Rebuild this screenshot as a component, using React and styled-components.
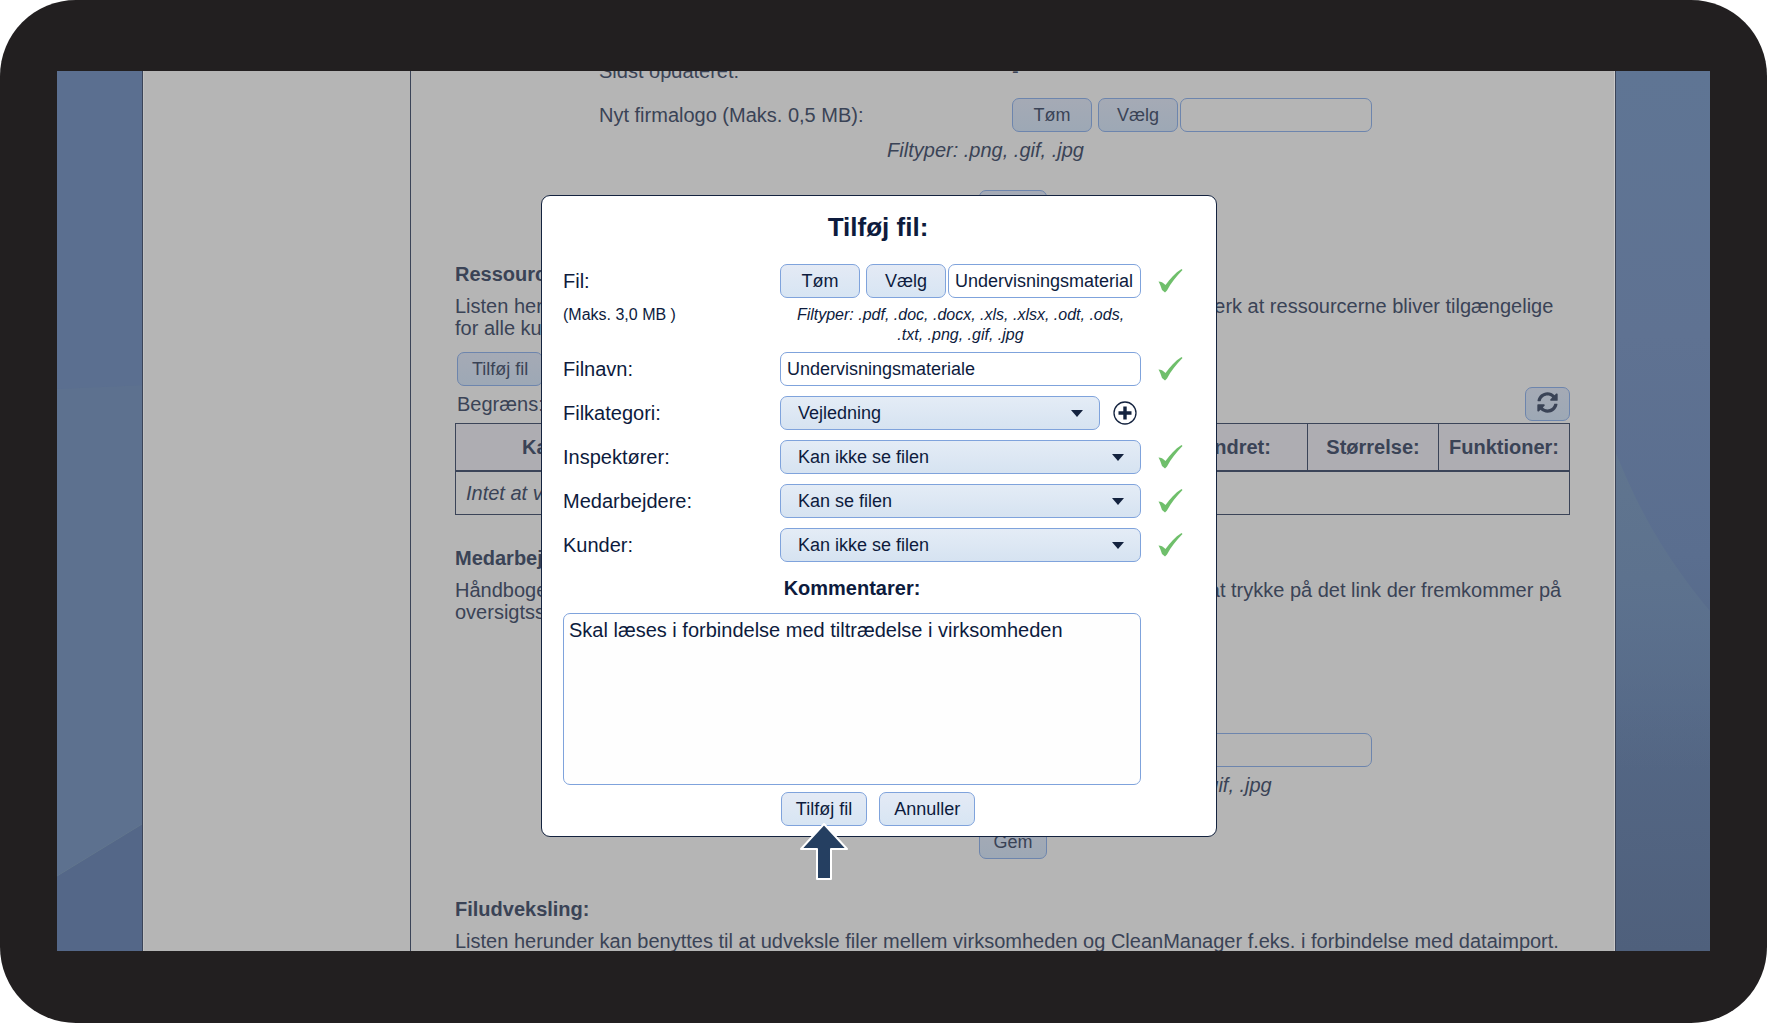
import { useState } from "react";
import styled, { createGlobalStyle } from "styled-components";
import { FaSyncAlt } from "react-icons/fa";

const GlobalStyle = createGlobalStyle`
  * {
    box-sizing: border-box;
  }
  body {
    margin: 0;
    background: #fff;
    font-family: "Liberation Sans", Arial, sans-serif;
    font-size: 20px;
    line-height: 22px;
  }
  button,
  input,
  select,
  textarea {
    font-family: inherit;
    margin: 0;
  }
`;

const Device = styled.div`
  height: 100vh;
  min-height: 900px;
  padding: 71px 57px 72px;
  border-radius: 76px;
  background: #221f20;
`;

const Screen = styled.div`
  position: relative;
  height: 100%;
  overflow: hidden;
  background: #5b6f90;
`;

const WallpaperSvg = styled.svg`
  position: absolute;
  inset: 0;
  width: 100%;
  height: 100%;
`;

const Page = styled.div`
  position: relative;
  display: flex;
  height: 100%;
  margin: 0 94px 0 85px;
  overflow: hidden;
  background: #b5b5b5;
  border: solid #3b4458;
  border-width: 0 1px;
  box-shadow: inset 1px 0 #c0c0c0, inset -1px 0 #cacaca;
  color: #3a4356;
`;

const Sidebar = styled.aside`
  flex: 0 0 268px;
  border-right: 1px solid #3b4458;
`;

const Main = styled.main`
  flex: 1;
  min-width: 0;
  height: max-content;
  margin-top: -11px;
  padding: 0 45px 0 44px;
`;

const Heading = styled.h2`
  margin: 0 0 10px;
  font-size: 20px;
  line-height: 22px;
`;

const Text = styled.p`
  margin: 0;
`;

const UploadForm = styled.form`
  display: flex;
  flex-direction: column;
  padding: 0 144px;
  margin: ${(props) => (props.$spaced ? "72px 0 39px" : "0 0 39px")};
`;

const UploadRow = styled.div`
  display: flex;
  align-items: center;
  margin-bottom: ${(props) => props.$gap}px;
`;

const UploadLabel = styled.label`
  flex: 1;
`;

const UploadValue = styled.span`
  flex: 0 0 414px;
`;

const UploadControls = styled.div`
  flex: 0 0 414px;
  display: flex;
  padding-right: 54px;
`;

const FileTypes = styled.p`
  margin: 0 54px 29px 0;
  text-align: center;
  font-style: italic;
`;

const Button = styled.button`
  height: 34px;
  padding: 0 14px;
  border: 1px solid ${(props) => (props.$dim ? "#6d85ad" : "#7fa3dc")};
  border-radius: 7px;
  background: ${(props) =>
    props.$dim
      ? "linear-gradient(#a5aab5, #9da8b5)"
      : "linear-gradient(#e4eaf5, #d7e5f3)"};
  color: ${(props) => (props.$dim ? "#3a4356" : "#0d1b3d")};
  font-size: 18px;
  line-height: 22px;
  white-space: nowrap;
`;

const FileButton = styled(Button)`
  flex: 0 0 80px;
  padding: 0;
  margin-right: ${(props) => (props.$last ? 2 : 6)}px;
`;

const CenterButton = styled(Button)`
  align-self: center;
  width: 68px;
`;

const IconButton = styled(Button)`
  width: 45px;
  padding: 0 0 3px;
  svg {
    display: block;
    margin: 0 auto;
  }
`;

const Input = styled.input`
  flex: 1;
  width: 100%;
  min-width: 0;
  height: 34px;
  padding: 0 6px;
  border: 1px solid ${(props) => (props.$dim ? "#6d85ad" : "#7fa3dc")};
  border-radius: 7px;
  background: ${(props) => (props.$dim ? "#b5b5b5" : "#fff")};
  color: #0d1b3d;
  font-size: 18px;
`;

const ListActions = styled.div`
  padding: 13px 0 1px 2px;
`;

const FilterBar = styled.div`
  display: flex;
  align-items: center;
  justify-content: space-between;
  padding-left: 2px;
  margin-bottom: 2px;
`;

const Table = styled.table`
  width: 100%;
  margin-bottom: 32px;
  border-collapse: collapse;
  table-layout: fixed;
  th,
  td {
    border: 1px solid #3b4458;
    padding: 0 10px;
  }
  th {
    height: 47px;
    border-bottom-width: 2px;
    background: #aeadb2;
  }
  td {
    height: 44px;
    font-style: italic;
  }
`;

const Overlay = styled.div`
  position: absolute;
  inset: 0;
  display: flex;
  justify-content: center;
  align-items: flex-start;
  padding: 124px 94px 0 85px;
`;

const Dialog = styled.form`
  width: 676px;
  padding: 16px 23px 10px 21px;
  border: 1px solid #14233f;
  border-radius: 9px;
  background: #fff;
  color: #0d1b3d;
`;

const DialogTitle = styled.h1`
  margin: 0 0 22px;
  font-size: 26px;
  line-height: 30px;
  text-align: center;
`;

const Fields = styled.div`
  display: grid;
  grid-template-columns: 217px 361px 1fr;
  row-gap: 10px;
  align-items: center;
`;

const FieldControls = styled.div`
  display: flex;
  align-items: center;
`;

const TickSvg = styled.svg`
  display: block;
  margin-left: 17px;
`;

const Hints = styled.div`
  grid-column: 1 / -1;
  display: grid;
  grid-template-columns: 217px 361px;
  margin: -3px 0;
  font-size: 16px;
  line-height: 20px;
`;

const FormatHint = styled.em`
  padding: 0 10px;
  text-align: center;
`;

const SelectBox = styled.div`
  flex: 1;
  display: grid;
  align-items: center;
  > * {
    grid-area: 1 / 1;
  }
  svg {
    justify-self: end;
    margin-right: 17px;
    pointer-events: none;
  }
`;

const Select = styled.select`
  width: 100%;
  height: 34px;
  padding: 0 36px 0 17px;
  appearance: none;
  border: 1px solid #7fa3dc;
  border-radius: 7px;
  background: linear-gradient(#e4ecf6, #d6e3f1);
  color: #0d1b3d;
  font-size: 18px;
`;

const AddButton = styled.button`
  display: block;
  margin: 0 4px 0 13px;
  padding: 0;
  border: 0;
  background: none;
  svg {
    display: block;
  }
`;

const Comments = styled.div`
  width: 578px;
  margin: 15px 0 7px;
  text-align: center;
`;

const CommentsLabel = styled.label`
  display: block;
  margin-bottom: 14px;
  font-weight: bold;
`;

const TextArea = styled.textarea`
  display: block;
  width: 100%;
  height: 172px;
  padding: 5px;
  border: 1px solid #7fa3dc;
  border-radius: 7px;
  background: #fefefe;
  color: #0d1b3d;
  font-size: 20px;
  line-height: 22px;
  resize: none;
`;

const DialogActions = styled.div`
  display: flex;
  justify-content: center;
  gap: 12px;
`;

const Pointed = styled.div`
  position: relative;
`;

const PointerSvg = styled.svg`
  position: absolute;
  top: 30px;
  left: 50%;
  margin-left: -26px;
  pointer-events: none;
`;

function Wallpaper() {
  return (
    <WallpaperSvg viewBox="0 0 1653 880" preserveAspectRatio="none" aria-hidden="true">
      <defs>
        <linearGradient id="right" x1="0" y1="0" x2="0" y2="1">
          <stop offset="0" stopColor="#5f7594" />
          <stop offset="0.3" stopColor="#5f7292" />
          <stop offset="0.55" stopColor="#5a6e8f" />
          <stop offset="0.75" stopColor="#546785" />
          <stop offset="1" stopColor="#4f607c" />
        </linearGradient>
        <linearGradient id="sweep" x1="0" y1="0" x2="0" y2="1">
          <stop offset="0" stopColor="#60758f" />
          <stop offset="0.4" stopColor="#5d728e" />
          <stop offset="1" stopColor="#5a6f8b" stopOpacity="0" />
        </linearGradient>
      </defs>
      <path d="M0 0H800V880H0Z" fill="#5b6f90" />
      <path d="M0 318L90 314V752L0 805Z" fill="#5d718f" />
      <path d="M0 805L90 750V880H0Z" fill="#546788" />
      <path d="M0 805L90 750" stroke="#62768e" strokeWidth="1" />
      <path d="M800 0H1653V880H800Z" fill="url(#right)" />
      <path d="M1558 380C1575 420 1595 470 1653 540V700H1558Z" fill="url(#sweep)" />
    </WallpaperSvg>
  );
}

function Tick() {
  return (
    <TickSvg width="25" height="24" viewBox="0 0 25 24" role="img" aria-label="Gyldig">
      <path
        d="M0.5 12.5C3 12.5 5 13.5 7.5 16C12 10 17 4 23.5 0L24.5 1C18 8 13 14 9 21.5L7 23.5L4 21C3 18 2 15 0.5 12.5Z"
        fill="#6fbf6b"
      />
    </TickSvg>
  );
}

function Caret() {
  return (
    <svg width="12" height="7" viewBox="0 0 12 7" aria-hidden="true">
      <path d="M0 0H12L6 7Z" fill="#14233f" />
    </svg>
  );
}

function Dropdown({ id, value, options }) {
  const [selected, setSelected] = useState(value);
  return (
    <SelectBox>
      <Select id={id} value={selected} onChange={(ev) => setSelected(ev.target.value)}>
        {options.map((option) => (
          <option key={option}>{option}</option>
        ))}
      </Select>
      <Caret />
    </SelectBox>
  );
}

function Upload({ id, label, types, spaced }) {
  return (
    <UploadForm $spaced={spaced}>
      <UploadRow $gap={16}>
        <UploadLabel as="span">Sidst opdateret:</UploadLabel>
        <UploadValue>-</UploadValue>
      </UploadRow>
      <UploadRow $gap={7}>
        <UploadLabel htmlFor={id}>{label}</UploadLabel>
        <UploadControls>
          <FileButton type="button" $dim>Tøm</FileButton>
          <FileButton type="button" $dim $last>Vælg</FileButton>
          <Input id={id} $dim />
        </UploadControls>
      </UploadRow>
      <FileTypes>Filtyper: {types}</FileTypes>
      <CenterButton type="button" $dim>Gem</CenterButton>
    </UploadForm>
  );
}

const access = ["Kan se filen", "Kan ikke se filen"];

const accessFields = [
  { id: "inspectors", label: "Inspektører:", value: "Kan ikke se filen" },
  { id: "employees", label: "Medarbejdere:", value: "Kan se filen" },
  { id: "customers", label: "Kunder:", value: "Kan ikke se filen" },
];

function AccessField({ id, label, value }) {
  return (
    <>
      <label htmlFor={id}>{label}</label>
      <Dropdown id={id} value={value} options={access} />
      <Tick />
    </>
  );
}

function AddFileDialog() {
  return (
    <Dialog role="dialog" aria-labelledby="dialog-title">
      <DialogTitle id="dialog-title">Tilføj fil:</DialogTitle>
      <Fields>
        <label htmlFor="file">Fil:</label>
        <FieldControls>
          <FileButton type="button">Tøm</FileButton>
          <FileButton type="button" $last>Vælg</FileButton>
          <Input id="file" defaultValue="Undervisningsmaterial" />
        </FieldControls>
        <Tick />
        <Hints>
          <span>(Maks. 3,0 MB )</span>
          <FormatHint>
            Filtyper: .pdf, .doc, .docx, .xls, .xlsx, .odt, .ods, .txt, .png, .gif, .jpg
          </FormatHint>
        </Hints>
        <label htmlFor="filename">Filnavn:</label>
        <Input id="filename" defaultValue="Undervisningsmateriale" />
        <Tick />
        <label htmlFor="category">Filkategori:</label>
        <FieldControls>
          <Dropdown id="category" value="Vejledning" options={["Vejledning"]} />
          <AddButton type="button" aria-label="Tilføj kategori">
            <svg width="24" height="24" viewBox="0 0 24 24">
              <circle cx="12" cy="12" r="11" fill="none" stroke="#14233f" strokeWidth="1.3" />
              <path d="M12 5.5V18.5M5.5 12H18.5" stroke="#14233f" strokeWidth="3.4" />
            </svg>
          </AddButton>
        </FieldControls>
        <span />
        {accessFields.map((field) => (
          <AccessField key={field.id} {...field} />
        ))}
      </Fields>
      <Comments>
        <CommentsLabel htmlFor="comments">Kommentarer:</CommentsLabel>
        <TextArea
          id="comments"
          defaultValue="Skal læses i forbindelse med tiltrædelse i virksomheden"
        />
      </Comments>
      <DialogActions>
        <Pointed>
          <Button type="button">Tilføj fil</Button>
          <PointerSvg width="52" height="60" viewBox="0 0 52 60" aria-hidden="true">
            <path
              d="M26 2L49 27H33V57H19V27H3Z"
              fill="#253f61"
              stroke="#fff"
              strokeWidth="2"
              strokeLinejoin="round"
            />
          </PointerSvg>
        </Pointed>
        <Button type="button">Annuller</Button>
      </DialogActions>
    </Dialog>
  );
}

function App() {
  return (
    <Device>
      <GlobalStyle />
      <Screen>
        <Wallpaper />
        <Page>
          <Sidebar />
          <Main>
            <Upload id="logo" label="Nyt firmalogo (Maks. 0,5 MB):" types=".png, .gif, .jpg" />
            <Heading>Ressourcer:</Heading>
            <Text>
              Listen herunder kan benyttes til at fordele filer med alle virksomhedens brugere.
              Bemærk at ressourcerne bliver tilgængelige for alle kunder.
            </Text>
            <ListActions>
              <Button type="button" $dim>Tilføj fil</Button>
            </ListActions>
            <FilterBar>
              <span>Begræns:</span>
              <IconButton type="button" $dim aria-label="Opdater">
                <FaSyncAlt size={21} />
              </IconButton>
            </FilterBar>
            <Table>
              <colgroup>
                <col width="221" />
                <col />
                <col width="202" />
                <col width="131" />
                <col width="131" />
              </colgroup>
              <thead>
                <tr>
                  <th>Kategori:</th>
                  <th>Filnavn:</th>
                  <th>Sidst ændret:</th>
                  <th>Størrelse:</th>
                  <th>Funktioner:</th>
                </tr>
              </thead>
              <tbody>
                <tr>
                  <td colSpan={5}>Intet at vise</td>
                </tr>
              </tbody>
            </Table>
            <Heading>Medarbejderhåndbog:</Heading>
            <Text>
              Håndbogen kan altid hentes af alle medarbejdere og inspektører i virksomheden ved at
              trykke på det link der fremkommer på oversigtssiden.
            </Text>
            <Upload
              id="handbook"
              label="Ny håndbog (Maks. 3,0 MB):"
              types=".pdf, .doc, .docx, .xls, .xlsx, .odt, .ods, .txt, .png, .gif, .jpg"
              spaced
            />
            <Heading>Filudveksling:</Heading>
            <Text>
              Listen herunder kan benyttes til at udveksle filer mellem virksomheden og CleanManager
              f.eks. i forbindelse med dataimport.
            </Text>
          </Main>
        </Page>
        <Overlay>
          <AddFileDialog />
        </Overlay>
      </Screen>
    </Device>
  );
}

export default App;
